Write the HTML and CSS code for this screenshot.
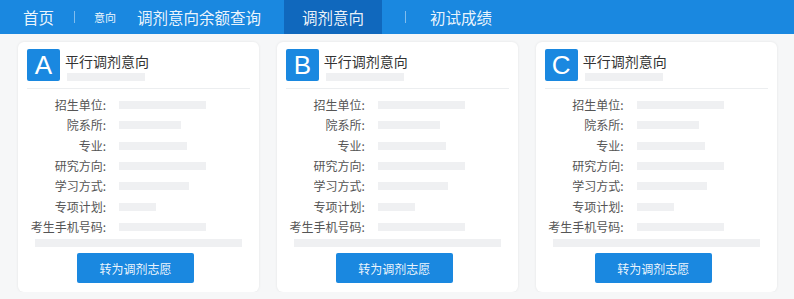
FILE: index.html
```html
<!DOCTYPE html>
<html lang="zh-CN">
<head>
<meta charset="UTF-8" />
<meta name="viewport" content="width=device-width, initial-scale=1" />
<title>调剂意向</title>
<link rel="stylesheet" href="styles.css">
</head>
<body>
  <div class="nav">
    <span class="nav-item first">首页</span>
    <span class="nav-sep"></span>
    <span class="nav-item small">意向</span>
    <span class="nav-item">调剂意向余额查询</span>
    <span class="nav-item active">调剂意向</span>
    <span class="nav-sep after-active"></span>
    <span class="nav-item">初试成绩</span>
  </div>

  <div class="cards">
    <div class="card">
      <div class="card-head">
        <div class="badge">A</div>
        <div class="head-text">
          <div class="title">平行调剂意向</div>
          <div class="ph ph-title"></div>
        </div>
      </div>
      <div class="rows">
        <div class="label">招生单位:</div><div class="ph" style="width:87px"></div>
        <div class="label">院系所:</div><div class="ph" style="width:62px"></div>
        <div class="label">专业:</div><div class="ph" style="width:68px"></div>
        <div class="label">研究方向:</div><div class="ph" style="width:87px"></div>
        <div class="label">学习方式:</div><div class="ph" style="width:70px"></div>
        <div class="label">专项计划:</div><div class="ph" style="width:37px"></div>
        <div class="label">考生手机号码:</div><div class="ph" style="width:87px"></div>
      </div>
      <div class="ph ph-full"></div>
      <button class="btn">转为调剂志愿</button>
    </div>

    <div class="card">
      <div class="card-head">
        <div class="badge">B</div>
        <div class="head-text">
          <div class="title">平行调剂意向</div>
          <div class="ph ph-title"></div>
        </div>
      </div>
      <div class="rows">
        <div class="label">招生单位:</div><div class="ph" style="width:87px"></div>
        <div class="label">院系所:</div><div class="ph" style="width:62px"></div>
        <div class="label">专业:</div><div class="ph" style="width:68px"></div>
        <div class="label">研究方向:</div><div class="ph" style="width:87px"></div>
        <div class="label">学习方式:</div><div class="ph" style="width:70px"></div>
        <div class="label">专项计划:</div><div class="ph" style="width:37px"></div>
        <div class="label">考生手机号码:</div><div class="ph" style="width:87px"></div>
      </div>
      <div class="ph ph-full"></div>
      <button class="btn">转为调剂志愿</button>
    </div>

    <div class="card">
      <div class="card-head">
        <div class="badge">C</div>
        <div class="head-text">
          <div class="title">平行调剂意向</div>
          <div class="ph ph-title"></div>
        </div>
      </div>
      <div class="rows">
        <div class="label">招生单位:</div><div class="ph" style="width:87px"></div>
        <div class="label">院系所:</div><div class="ph" style="width:62px"></div>
        <div class="label">专业:</div><div class="ph" style="width:68px"></div>
        <div class="label">研究方向:</div><div class="ph" style="width:87px"></div>
        <div class="label">学习方式:</div><div class="ph" style="width:70px"></div>
        <div class="label">专项计划:</div><div class="ph" style="width:37px"></div>
        <div class="label">考生手机号码:</div><div class="ph" style="width:87px"></div>
      </div>
      <div class="ph ph-full"></div>
      <button class="btn">转为调剂志愿</button>
    </div>
  </div>
</body>
</html>
```

FILE: styles.css
```css
body {
  margin: 0;
  background: #f6f7f8;
  font-family: "Noto Sans CJK SC", "Noto Sans", sans-serif;
  color: #333;
}
.nav {
  display: flex;
  align-items: center;
  height: 34px;
  padding-left: 23px;
  background: #1a88e0;
  color: rgba(255, 255, 255, 0.93);
  font-size: 15.5px;
}
.nav-item {
  display: flex;
  align-items: center;
  height: 100%;
  margin-right: 23px;
  white-space: nowrap;
}
.nav-item.first { margin-right: 20px; }
.nav-item.small { font-size: 11px; margin-right: 21px; }
.nav-item.active {
  background: #1068bd;
  padding: 0 18px;
}
.nav-sep {
  width: 1px;
  height: 12px;
  background: rgba(255, 255, 255, 0.45);
  margin-right: 19px;
}
.nav-sep.after-active { margin-right: 24px; }

.cards {
  display: grid;
  grid-template-columns: repeat(3, 1fr);
  gap: 17.5px;
  padding: 8px 17px 0 18px;
}
.card {
  background: #fff;
  border-radius: 6px;
  box-shadow: 0 0 3px rgba(0, 0, 0, 0.08);
  padding: 7px 9px 9px;
}
.card-head {
  display: flex;
  align-items: flex-start;
  padding-bottom: 7px;
  border-bottom: 1px solid #eceef0;
}
.badge {
  width: 33px;
  height: 32px;
  border-radius: 2px;
  background: #1a88e0;
  color: #fff;
  font-family: "Liberation Sans", Arial, sans-serif;
  font-size: 26px;
  line-height: 32px;
  text-align: center;
  margin-right: 5px;
}
.head-text { padding-top: 2px; }
.title {
  font-size: 14px;
  line-height: 20px;
  color: #333;
}
.ph {
  height: 8px;
  background: #eff0f2;
}
.ph-title {
  width: 78px;
  margin-top: 2px;
  margin-left: 2px;
}
.rows {
  display: grid;
  grid-template-columns: 79px 1fr;
  column-gap: 13px;
  grid-auto-rows: 20.3px;
  align-items: center;
  margin-top: 6px;
}
.label {
  font-size: 12px;
  line-height: 20px;
  color: #555;
  text-align: right;
  white-space: nowrap;
}
.ph-full {
  margin: 1.5px 8px 0;
  height: 8.5px;
}
.btn {
  display: block;
  width: 117px;
  height: 30px;
  margin: 6px 0 0 50px;
  border: none;
  border-radius: 2px;
  background: #1a88e0;
  color: rgba(255, 255, 255, 0.93);
  font-family: "Noto Sans CJK SC", sans-serif;
  font-size: 12px;
}
```
